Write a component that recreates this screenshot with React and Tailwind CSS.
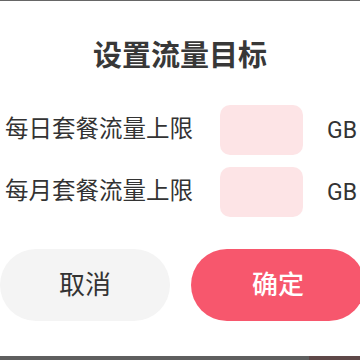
export default function App() {
  const rows = ['每日套餐流量上限', '每月套餐流量上限'];

  return (
    <div
      className="relative w-[360px] h-[360px] overflow-hidden bg-white text-[#333]"
      style={{ fontFamily: 'Roboto, "Noto Sans CJK SC", sans-serif' }}
    >
      {/* cut-off edge of the screen above */}
      <div className="h-px bg-[#666]" />

      {/* title */}
      <div className="mt-[35px] h-[40px] flex items-center justify-center text-[29px] font-bold leading-none text-[#383838]">
        设置流量目标
      </div>

      {/* limit rows */}
      <div className="mt-[29px] flex flex-col gap-[12px]">
        {rows.map((label) => (
          <div key={label} className="flex items-center h-[50px] pl-[5px]">
            <span className="w-[215px] text-[23.5px] leading-none">{label}</span>
            <div className="w-[83px] h-[50px] rounded-[10px] bg-[#fde4e6]" />
            <span className="ml-[24px] text-[23px] leading-none">GB</span>
          </div>
        ))}
      </div>

      {/* actions */}
      <div className="mt-[32px] flex gap-[21px]">
        <button className="w-[170px] h-[72px] shrink-0 rounded-full bg-[#f4f4f4] text-[26px] text-[#333]">
          取消
        </button>
        <button className="w-[174px] h-[72px] shrink-0 rounded-full bg-[#f7576d] text-[26px] font-medium text-white">
          确定
        </button>
      </div>

      {/* bottom bar */}
      <div className="absolute left-0 right-0 bottom-0 h-[4px] flex">
        <div className="w-[309px] bg-[#5f5f5f]" />
        <div className="flex-1 bg-[#5e4848]" />
      </div>
    </div>
  );
}
